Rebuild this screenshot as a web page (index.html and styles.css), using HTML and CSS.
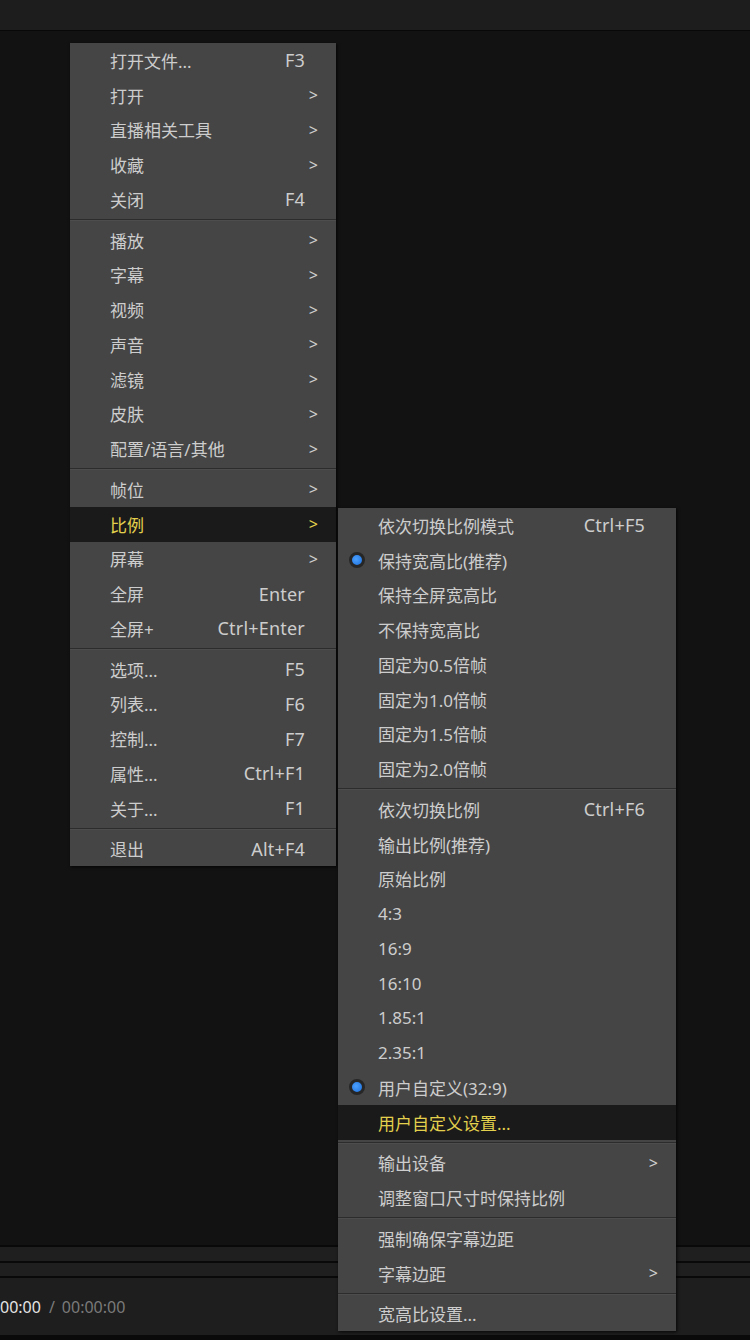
FILE: index.html
```html
<!DOCTYPE html>
<html>
    <head>
        <meta charset="utf-8">
        <link rel="stylesheet" href="styles.css">
        <title>Player</title>
    </head>
    <body>
        <div class="app">
            <div class="titleBar"></div>
            <div class="videoArea"></div>
            <div class="seekBar"></div>
            <div class="seekBar second"></div>
            <div class="controlBar">
                <span class="timeNow">00:00</span>
                <span class="timeSep">/</span>
                <span class="timeTotal">00:00:00</span>
            </div>
            <div class="bottomEdge"></div>
        </div>

        <div class="menu mainMenu">
            <div class="item"><span class="label">打开文件...</span><span class="key">F3</span></div>
            <div class="item"><span class="label">打开</span><span class="arrow">&gt;</span></div>
            <div class="item"><span class="label">直播相关工具</span><span class="arrow">&gt;</span></div>
            <div class="item"><span class="label">收藏</span><span class="arrow">&gt;</span></div>
            <div class="item"><span class="label">关闭</span><span class="key">F4</span></div>
            <div class="separator"></div>
            <div class="item"><span class="label">播放</span><span class="arrow">&gt;</span></div>
            <div class="item"><span class="label">字幕</span><span class="arrow">&gt;</span></div>
            <div class="item"><span class="label">视频</span><span class="arrow">&gt;</span></div>
            <div class="item"><span class="label">声音</span><span class="arrow">&gt;</span></div>
            <div class="item"><span class="label">滤镜</span><span class="arrow">&gt;</span></div>
            <div class="item"><span class="label">皮肤</span><span class="arrow">&gt;</span></div>
            <div class="item"><span class="label">配置/语言/其他</span><span class="arrow">&gt;</span></div>
            <div class="separator"></div>
            <div class="item"><span class="label">帧位</span><span class="arrow">&gt;</span></div>
            <div class="item active"><span class="label">比例</span><span class="arrow">&gt;</span></div>
            <div class="item"><span class="label">屏幕</span><span class="arrow">&gt;</span></div>
            <div class="item"><span class="label">全屏</span><span class="key">Enter</span></div>
            <div class="item"><span class="label">全屏+</span><span class="key">Ctrl+Enter</span></div>
            <div class="separator"></div>
            <div class="item"><span class="label">选项...</span><span class="key">F5</span></div>
            <div class="item"><span class="label">列表...</span><span class="key">F6</span></div>
            <div class="item"><span class="label">控制...</span><span class="key">F7</span></div>
            <div class="item"><span class="label">属性...</span><span class="key">Ctrl+F1</span></div>
            <div class="item"><span class="label">关于...</span><span class="key">F1</span></div>
            <div class="separator"></div>
            <div class="item"><span class="label">退出</span><span class="key">Alt+F4</span></div>
        </div>

        <div class="menu subMenu">
            <div class="item"><span class="label">依次切换比例模式</span><span class="key">Ctrl+F5</span></div>
            <div class="item"><span class="radio"><span class="dot"></span></span><span class="label">保持宽高比(推荐)</span></div>
            <div class="item"><span class="label">保持全屏宽高比</span></div>
            <div class="item"><span class="label">不保持宽高比</span></div>
            <div class="item"><span class="label">固定为0.5倍帧</span></div>
            <div class="item"><span class="label">固定为1.0倍帧</span></div>
            <div class="item"><span class="label">固定为1.5倍帧</span></div>
            <div class="item"><span class="label">固定为2.0倍帧</span></div>
            <div class="separator"></div>
            <div class="item"><span class="label">依次切换比例</span><span class="key">Ctrl+F6</span></div>
            <div class="item"><span class="label">输出比例(推荐)</span></div>
            <div class="item"><span class="label">原始比例</span></div>
            <div class="item"><span class="label">4:3</span></div>
            <div class="item"><span class="label">16:9</span></div>
            <div class="item"><span class="label">16:10</span></div>
            <div class="item"><span class="label">1.85:1</span></div>
            <div class="item"><span class="label">2.35:1</span></div>
            <div class="item"><span class="radio"><span class="dot"></span></span><span class="label">用户自定义(32:9)</span></div>
            <div class="item active"><span class="label">用户自定义设置...</span></div>
            <div class="separator"></div>
            <div class="item"><span class="label">输出设备</span><span class="arrow">&gt;</span></div>
            <div class="item"><span class="label">调整窗口尺寸时保持比例</span></div>
            <div class="separator"></div>
            <div class="item"><span class="label">强制确保字幕边距</span></div>
            <div class="item"><span class="label">字幕边距</span><span class="arrow">&gt;</span></div>
            <div class="separator"></div>
            <div class="item"><span class="label">宽高比设置...</span></div>
        </div>
    </body>
</html>
```

FILE: styles.css
```css
html, body {
    margin: 0;
    background: #111111;
}
body {
    font-family: "Noto Sans", "Noto Sans CJK SC", sans-serif;
}
.app {
    display: flex;
    flex-direction: column;
    height: 1340px;
}
.titleBar {
    height: 30px;
    background: #1d1d1d;
    border-bottom: 1px solid #080808;
}
.videoArea {
    flex: 1;
    background: #121212;
}
.seekBar {
    height: 14px;
    background: #1f1f1f;
    border-top: 2px solid #090909;
}
.seekBar.second {
    height: 13px;
}
.controlBar {
    height: 57px;
    background: #1e1e1e;
    border-top: 2px solid #090909;
    display: flex;
    align-items: center;
    font-size: 16px;
    color: #7a7a7a;
}
.timeNow {
    color: #e4e4e4;
}
.timeSep {
    margin: 0 7px 0 8px;
}
.bottomEdge {
    height: 5px;
    background: #0a0a0a;
}

.menu {
    position: absolute;
    background: #454545;
    box-shadow: 1px 1px 3px rgba(0, 0, 0, 0.8);
    font-size: 17px;
    color: #cdcdcd;
}
.mainMenu {
    left: 70px;
    top: 43px;
    width: 266px;
}
.subMenu {
    left: 338px;
    top: 508px;
    width: 338px;
}
.item {
    display: flex;
    align-items: center;
    height: 34.75px;
    padding: 0 18px 0 40px;
    white-space: nowrap;
}
.item.active {
    background: #1a1a1a;
    color: #e3d04c;
}
.label {
    flex: 1;
}
.key {
    margin-right: 13px;
    font-size: 18px;
    letter-spacing: 0.2px;
}
.arrow {
    width: 13px;
    text-align: right;
    font-size: 16px;
}
.separator {
    height: 6px;
    display: flex;
    align-items: center;
}
.separator::before {
    content: "";
    flex: 1;
    height: 1px;
    background: #2c2c2c;
    border-bottom: 1px solid #4d4d4d;
}
.radio {
    width: 29px;
    margin-left: -29px;
    display: flex;
    align-items: center;
}
.dot {
    width: 10px;
    height: 10px;
    border-radius: 50%;
    border: 3.5px solid #262626;
    background: radial-gradient(circle at 40% 40%, #4aa0ff, #1e6fd8);
}
```
